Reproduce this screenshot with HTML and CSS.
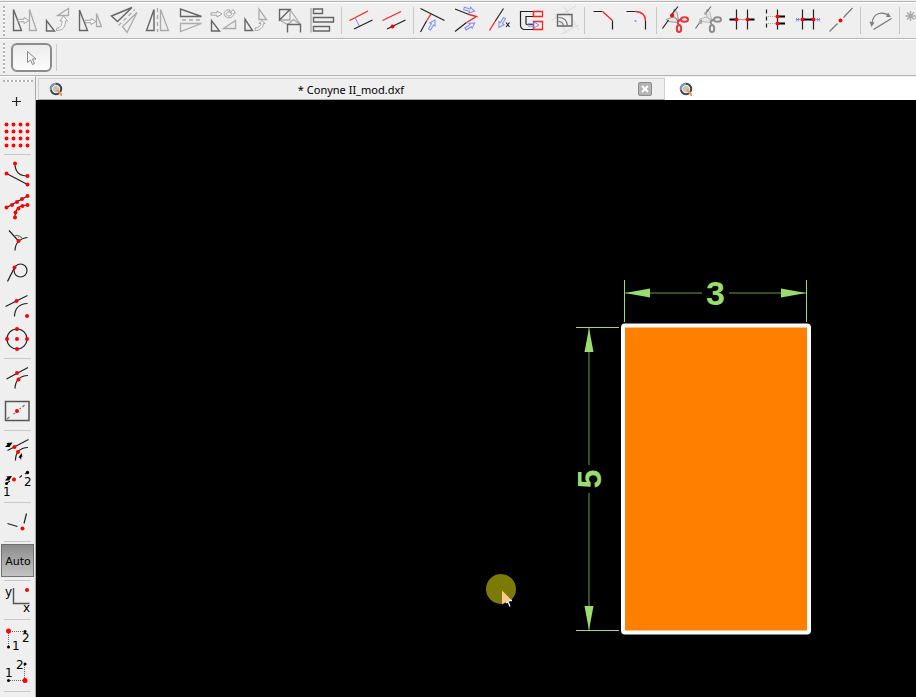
FILE: index.html
```html
<!DOCTYPE html>
<html lang="en">
<head>
<meta charset="utf-8">
<title>Conyne II_mod.dxf</title>
<link rel="stylesheet" href="styles.css">
</head>
<body>
<svg class="defs" width="0" height="0" aria-hidden="true">
  <defs>
    <path id="arrow" d="M0-1.5H6V-4L11 0L6 4V1.5H0z"/>
    <path id="pointer" d="M0-1.200H6V-3L11 0L6 3V1.200H0z"/>
    <g id="shears">
      <path class="blade" d="M14 5L13.5 12L19 18L17 8.500zM6 15.500L13 13L19.500 16L17 18.500L9 17.500z"/>
      <path class="ln" d="M2.500 24.500L8.500 16M12 10L18 2.500"/>
      <path class="handle" d="M17 17.500L21 15.500M17.500 18L18.500 20.500"/>
      <ellipse class="handle" cx="24.500" cy="15.500" rx="3.500" ry="2.200"/>
      <ellipse class="handle" cx="19" cy="24.500" rx="2.200" ry="3.600"/>
    </g>
    <g id="lens">
      <circle cx="8" cy="8" r="5.200" fill="#f1f1f1" stroke="#3c4450" stroke-width="2"/>
      <path d="M3 9A5.200 5.200 0 0 1 8 2.800" fill="none" stroke="#9098a4" stroke-width="2"/>
      <path d="M8 4.500V11.500M4.500 8H11.500M6 6H10V10H6z" stroke="#b4b4b4" fill="none"/>
      <path d="M9 9L13.500 13.500" stroke="#f09a3c" stroke-width="2.200" fill="none"/>
      <path d="M12.500 14L14 14.500" stroke="#d06040" fill="none"/>
    </g>
  </defs>
</svg>

<div class="app">
  <div class="strip"></div>

  <div class="toolbar" role="toolbar" aria-label="Modify">
    <span class="grip"></span>
    <button class="tool" aria-label="Move or copy"><svg viewBox="0 0 33 33"><path class="dk" d="M4.500 5.500V26.500H12.500z"/><path class="lt" d="M20.500 5.500V26.500H27.500z"/><use class="ar" href="#pointer" x="9" y="16.500"/></svg></button>
    <button class="tool" aria-label="Rotate"><svg viewBox="0 0 33 33"><path class="dk" d="M4.500 16.500V27H12.500z"/><path class="lt" d="M15.500 11.500L26.500 4.500V11.500z"/><path class="ar" d="M14.500 26.500C21.500 26.500 23.500 22 23.500 17H25.500L21.500 12L18 17H20C20 21 19 23.500 14.500 24.500z"/></svg></button>
    <button class="tool" aria-label="Scale"><svg viewBox="0 0 33 33"><path class="dk" d="M4.500 6V26.500H12.500z"/><path class="lt" d="M21.500 9.500V22.500H26.500z"/><use class="ar" href="#pointer" x="10" y="17.500"/></svg></button>
    <button class="tool" aria-label="Mirror"><svg viewBox="0 0 33 33"><path class="dk" d="M3.500 12L24 3.500L9.500 17.500z"/><path class="lt" d="M29 8.500L14.500 22.500L19 28.500z"/><path class="lt dash" d="M10.500 21.500L27 5.500"/></svg></button>
    <button class="tool" aria-label="Flip horizontal"><svg viewBox="0 0 33 33"><path class="dk" d="M13 5.500V26.500H5.500z"/><path class="lt" d="M19.500 5.500V26.500H27.500z"/><path class="lt dash" d="M16.500 4V28"/></svg></button>
    <button class="tool" aria-label="Flip vertical"><svg viewBox="0 0 33 33"><path class="dk" d="M6.500 5V12.500H27.500z"/><path class="lt" d="M27.500 19.500H6.500V27.500z"/><path class="lt dash" d="M8 16H28"/></svg></button>
    <button class="tool" aria-label="Move and rotate"><svg viewBox="0 0 33 33"><path class="dk" d="M4.500 16.500V27H12.500z"/><path class="lt" d="M16.500 24.500L28.500 16.500V24.500z"/><use class="ar" href="#pointer" x="4" y="10"/><path class="ar" d="M23 6C18 5 16 9 18 12C21 16 27 13 27 9H28.500L26 5.500L23 9H25C25 12 21 13 19.700 11C18.500 9 20 7.500 23 8z"/></svg></button>
    <button class="tool" aria-label="Rotate and copy"><svg viewBox="0 0 33 33"><path class="dk" d="M5 15V26.500H12.500z"/><path class="lt" d="M19 5V15.500H26.500z"/><path class="ar" d="M15 24C19 24 20.500 22 21 19.500H19L22 16.500L25 19.500H23.500C23 24 20 26.500 15 26.500z"/></svg></button>
    <button class="tool" aria-label="Align to reference"><svg viewBox="0 0 33 33"><path class="lt" d="M17 5.500L27.500 20.500M6.500 16L14.500 20.500M17 5.500V16H6.500M14.500 20.500L20.500 15.500L27.500 20.500"/><path class="dk" d="M17 5.500H6.500V16zM14.500 28.500V20.500H27.500V28.500"/></svg></button>
    <button class="tool" aria-label="Align left"><svg viewBox="0 0 33 33"><path class="lt" d="M5 4V28.500"/><path class="dk" d="M7.500 5H16.500V9.500H7.500zM7.500 13.500H27.500V18H7.500zM7.500 22.500H23.500V27H7.500z"/></svg></button>
    <span class="sep"></span>
    <button class="tool" aria-label="Offset with distance"><svg viewBox="0 0 33 33"><path class="rd" d="M4.500 16.500L23 7"/><path class="bl" d="M10 13.500L14.500 22.500"/><path class="ln" d="M9 25L27.500 16"/></svg></button>
    <button class="tool" aria-label="Offset through point"><svg viewBox="0 0 33 33"><path class="rd" d="M4.500 16.500L23 7.500"/><path class="ln" d="M9 25L27.500 16"/><circle class="pt" cx="14.500" cy="22.500" r="2"/></svg></button>
    <span class="sep"></span>
    <button class="tool" aria-label="Trim"><svg viewBox="0 0 33 33"><path class="ln" d="M3.500 4.500L27.500 16.500M3.500 28L9.500 17"/><path class="rd" d="M9.500 17L14 10"/><use class="bl" href="#pointer" transform="translate(12.500 25.500) rotate(-60)"/></svg></button>
    <button class="tool" aria-label="Trim both"><svg viewBox="0 0 33 33"><path class="ln" d="M5 5L19 10.500M5 27.500L16.500 18.500"/><path class="rd" d="M19 10.500L26.500 12.500L16.500 18.500"/><use class="bl" href="#pointer" transform="translate(14 4.500) rotate(15)"/><use class="bl" href="#pointer" transform="translate(15.500 25) rotate(-33)"/></svg></button>
    <button class="tool" aria-label="Lengthen"><svg viewBox="0 0 33 33"><path class="ln" d="M20.500 4.500L12 17.500"/><path class="rd" d="M12 17.500L6.500 26.500"/><use class="bl" href="#pointer" transform="translate(21.500 14) rotate(120)"/><path class="ln" d="M23 18.500L26.500 23M26.500 18.500L23 23"/></svg></button>
    <button class="tool" aria-label="Stretch"><svg viewBox="0 0 33 33"><path class="ln" d="M17.500 7.500H4.500V21Q4.500 25.500 9 25.500H17.500V20.500H11Q10 20.500 10 19.500V12.500H17.500z"/><path class="rd" d="M17.500 7.500H26.500V12.500H17.500zM17.500 17.500H26.500V25.500H17.500z"/><use class="bl" href="#pointer" x="12" y="21"/></svg></button>
    <button class="tool" aria-label="Clip to rectangle"><svg viewBox="0 0 33 33"><path class="faint" d="M2.500 16.500L27 2M15 2.500L30 26M5 9L18 29M12.500 30L29.500 21"/><path class="dk" d="M8.500 10.500H23V22H8.500z"/><path class="md" d="M9.500 13.500Q18 13.500 18.500 22M9.500 17.500Q14 17.500 14.500 22"/></svg></button>
    <span class="sep"></span>
    <button class="tool" aria-label="Bevel"><svg viewBox="0 0 33 33"><path class="ln" d="M5.500 7.500H14.500M24.500 16.500V25.500"/><path class="rd" d="M14.500 7.500L24.500 16.500"/></svg></button>
    <button class="tool" aria-label="Round"><svg viewBox="0 0 33 33"><path class="ln" d="M5.500 7.500H14.500M24.500 17V25.500"/><path class="rd" d="M14.500 7.500Q24.500 8 24.500 17"/><circle class="cp" cx="14.500" cy="17" r="1"/></svg></button>
    <span class="sep"></span>
    <button class="tool" aria-label="Divide"><svg viewBox="0 0 33 33"><use href="#shears"/><circle class="pt" cx="12" cy="11.500" r="2"/></svg></button>
    <button class="tool muted" aria-label="Divide segment"><svg viewBox="0 0 33 33"><use href="#shears"/><circle cx="7.500" cy="18.500" r="1.800"/><circle cx="12.500" cy="9.500" r="1.500"/></svg></button>
    <button class="tool" aria-label="Break out segment"><svg viewBox="0 0 33 33"><path class="lt" d="M10.500 15.500H21.500"/><path class="ln" d="M10.500 5.500V25.500M21.500 5.500V25.500"/><path class="ln thick" d="M3.500 15.500H10.500M21.500 15.500H28.500"/><circle class="pt" cx="10.500" cy="15.500" r="2"/><circle class="pt" cx="21.500" cy="15.500" r="2"/></svg></button>
    <button class="tool" aria-label="Auto trim"><svg viewBox="0 0 33 33"><path class="ln dash" d="M7.500 5.500V26"/><path class="lt dots" d="M9 12.500H17M9 19.500H17"/><path class="ln" d="M18.500 5.500V25.500"/><path class="ln thick" d="M18.500 12.500H26M18.500 19.500H26"/><circle class="pt" cx="18.500" cy="12.500" r="2"/><circle class="pt" cx="18.500" cy="19.500" r="2"/></svg></button>
    <button class="tool" aria-label="Break out gap"><svg viewBox="0 0 33 33"><path class="ln" d="M10.500 5.500V25.500M21.500 5.500V25.500"/><path class="bl" d="M8 15.500H4M4 14L7 17.500M7 14L4 17.500M24 15.500H28M25 14L28 17.500M28 14L25 17.500"/><path class="ln thick" d="M10.500 15.500H21.500"/><circle class="pt" cx="10.500" cy="15.500" r="2"/><circle class="pt" cx="21.500" cy="15.500" r="2"/></svg></button>
    <button class="tool" aria-label="Split at point"><svg viewBox="0 0 33 33"><path class="md" d="M4.500 27.500L12.500 19.500M18.500 13.500L27.500 4"/><circle class="pt" cx="15.500" cy="16.500" r="2"/></svg></button>
    <span class="sep"></span>
    <button class="tool" aria-label="Reverse"><svg viewBox="0 0 33 33"><path class="md" d="M9.500 25.500L27.500 14.500M8 19Q9 11 15 9.500Q20 8.500 24 11"/><path class="mdf" d="M5.500 17.500L10.500 18.500L7.500 23zM24 8.500L27 13L22 13z"/></svg></button>
    <span class="sep"></span>
    <button class="tool" aria-label="Explode"><svg viewBox="0 0 33 33"><path class="burst" d="M7.500 7V17M2.500 12H12.500M4 8.500L11 15.500M11 8.500L4 15.500M12 15L15 10"/></svg></button>
  </div>

  <div class="toolbar options" role="toolbar" aria-label="Options">
    <span class="grip"></span>
    <button class="select-tool" aria-label="Select"><svg viewBox="0 0 12 16"><path d="M1.500 1.500V12.500L4.500 10L6.500 14.500L8.500 13.500L6.500 9H10z"/></svg></button>
    <span class="rule"></span>
  </div>

  <div class="work">
    <div class="sidebar" role="toolbar" aria-label="Snaps" aria-orientation="vertical">
      <span class="hgrip"></span>
      <button class="tool" aria-label="Free positioning"><svg viewBox="0 0 33 33"><path class="ln" d="M15.500 12V21M11 16.500H20"/></svg></button>
      <button class="tool" aria-label="Snap to grid"><svg viewBox="0 0 33 33"><path class="dotgrid" d="M5.500 6.500H27M5.500 13.500H27M5.500 20.500H27M5.500 27.500H27"/></svg></button>
      <span class="vsep"></span>
      <button class="tool" aria-label="End points"><svg viewBox="0 0 33 33"><path class="ln" d="M14 6.500Q14 19 26.500 19M5.500 16.500L26.500 27.500"/><path class="pts" d="M14 6.500h0M26.500 19h0M5.500 16.500h0M26.500 27.500h0"/></svg></button>
      <button class="tool" aria-label="On entity"><svg viewBox="0 0 33 33"><path class="ln" d="M5.500 17.500L26.500 6M14 27.500Q14 15 26.500 15"/><path class="pts" d="M5.500 17.500h0M11 15h0M16 12h0M21 9h0M26.500 6h0M26.500 15h0M21.500 16h0M17.500 18.500h0M14.500 22.500h0M14 27.500h0"/></svg></button>
      <button class="tool" aria-label="Perpendicular"><svg viewBox="0 0 33 33"><path class="ln" d="M8 7.500L17.500 18M14 27.500Q14.500 16 26.500 14.500"/><path class="md" d="M13.500 13Q17 11 21 15"/><path class="pts" d="M17.500 18h0"/><circle class="cpd" cx="17.500" cy="14" r=".7"/></svg></button>
      <button class="tool" aria-label="Tangential"><svg viewBox="0 0 33 33"><circle class="ln" cx="19.500" cy="14.500" r="6.500"/><path class="ln" d="M6.500 25.500L13.500 11.500"/><path class="pts" d="M13.500 11.500h0"/></svg></button>
      <button class="tool" aria-label="Reference points"><svg viewBox="0 0 33 33"><path class="ln" d="M4.500 17.500L26.500 6.500M26.500 14.500Q14 15 13.500 27.500"/><path class="pts" d="M15.500 12h0M26 27h0"/></svg></button>
      <button class="tool" aria-label="Center points"><svg viewBox="0 0 33 33"><circle class="ln" cx="16" cy="17" r="10"/><path class="pts" d="M16 7h0M16 17h0M16 27h0M6 17h0M26 17h0"/></svg></button>
      <span class="vsep"></span>
      <button class="tool" aria-label="Middle points"><svg viewBox="0 0 33 33"><path class="ln" d="M5.500 18L27 6.500M27 14.500Q14.500 15 14 27.500"/><path class="pts" d="M16 12h0M17.500 18.500h0"/></svg></button>
      <button class="tool" aria-label="Middle of two points"><svg viewBox="0 0 33 33"><path class="box" d="M4.500 7.500H28V26.500H4.500z"/><path class="md" d="M6 25L8.500 23M12.500 20L14 19M18.500 15L20 14M21.500 13L23.500 11"/><path class="pts" d="M16 17h0"/></svg></button>
      <span class="vsep"></span>
      <button class="tool" aria-label="Distance from end"><svg viewBox="0 0 33 33"><path class="ln" d="M6.500 17.500L27.500 6.500M27 14.500Q14.500 15 14.500 27.500"/><path d="M4 14L6.500 11.500L5.500 10L11.500 9.500L8.500 14zM20 27L20.500 23.500L21.500 24L20.500 20L17.500 24.500L19 25z"/><path class="pts" d="M13.500 14h0M17 19h0"/></svg></button>
      <button class="tool" aria-label="Distance between points"><svg viewBox="0 0 33 33"><path d="M4 14.500L6.500 11.500L5 10.500L11 10L8 14.500z"/><path class="ln" d="M5.500 17.500L9 15M18.500 11.500L21 9.500M24 8L26.500 6.500"/><circle cx="5.500" cy="17.500" r="1.500"/><circle cx="26.500" cy="6.500" r="1.700"/><path class="pts" d="M13 13.500h0"/><text x="2" y="30">1</text><text x="23" y="20">2</text></svg></button>
      <span class="vsep"></span>
      <button class="tool" aria-label="Intersection"><svg viewBox="0 0 33 33"><path class="ln" d="M6.500 18.500L16.500 21.500M25.500 8.500L23 18.500"/><path class="pts" d="M21.500 23.500h0"/></svg></button>
      <span class="vsep"></span>
      <button class="auto" aria-pressed="true">Auto</button>
      <span class="vsep"></span>
      <button class="tool" aria-label="Coordinate"><svg viewBox="0 0 33 33"><path class="box" d="M12.500 5V20.500H28.500"/><path class="pts" d="M26 7h0"/><text x="4" y="13">y</text><text x="22" y="29">x</text></svg></button>
      <span class="vsep"></span>
      <button class="tool" aria-label="Restrict orthogonally"><svg viewBox="0 0 33 33"><path class="dk dots" d="M7 9.500H24M7.500 9V25"/><circle cx="24" cy="9.500" r="1.500"/><circle cx="7.500" cy="25" r="1.500"/><circle class="pt" cx="7.500" cy="9" r="2.500"/><text x="21" y="20">2</text><text x="11" y="28">1</text></svg></button>
      <button class="tool" aria-label="Restrict vertically"><svg viewBox="0 0 33 33"><path class="dk dots" d="M7 25.500H24M23.500 25V9"/><circle cx="24" cy="9" r="1.500"/><circle cx="7.500" cy="25.500" r="1.500"/><circle class="pt" cx="24" cy="25.500" r="2.500"/><text x="15" y="14">2</text><text x="4" y="22">1</text></svg></button>
      <span class="vsep"></span>
    </div>

    <main class="document">
      <div class="tabs" role="tablist">
        <div class="tab" role="tab">
          <svg class="lens" viewBox="0 0 16 16"><use href="#lens"/></svg>
          <span class="name">* Conyne II_mod.dxf</span>
          <button class="close" aria-label="Close tab"><svg viewBox="0 0 10 10"><path d="M2 2L8 8M8 2L2 8"/></svg></button>
        </div>
        <div class="tab current" role="tab" aria-selected="true">
          <svg class="lens" viewBox="0 0 16 16"><use href="#lens"/></svg>
        </div>
      </div>
      <div class="canvas">
        <svg class="drawing" width="880" height="597">
          <rect class="solid" x="587" y="225.500" width="186" height="307" rx="2"/>
          <path class="ext" d="M588.500 180V222M770.500 180V222M540 227.500H583M540 530.500H583"/>
          <path class="dim" d="M589 193H666M693 193H770M553 228V365M553 393V530"/>
          <path class="head" d="M589 193L614 188.500V197.500zM770 193L745 188.500V197.500zM553 228L548.500 252H557.500zM553 530L548.500 506H557.500z"/>
          <text class="value" x="679.500" y="205">3</text>
          <text class="value" transform="translate(565 379) rotate(-90)">5</text>
          <circle class="halo" cx="465" cy="489" r="15"/>
          <path class="ptr" d="M466 490.500V504.500L469.500 502L475.500 500z"/>
          <path class="tail" d="M470 503L472 501.500L474 506.500M473 500.500L476 500.500"/>
        </svg>
      </div>
    </main>
  </div>
</div>
</body>
</html>
```
FILE: styles.css
```css
* { box-sizing: border-box; }

body {
  margin: 0;
  background: #efefef;
  font-family: "DejaVu Sans", sans-serif;
  font-size: 11px;
  color: #000;
}

.defs { position: absolute; }

.app {
  display: flex;
  flex-direction: column;
  height: 100vh;
  overflow: hidden;
}

.strip {
  flex: none;
  height: 2px;
  border-bottom: 1px solid #b4b4b4;
}

button {
  margin: 0;
  padding: 0;
  border: 0;
  background: none;
  font: inherit;
  color: inherit;
}

.toolbar {
  flex: none;
  display: flex;
  align-items: center;
  height: 37px;
  border-top: 1px solid #fff;
  border-bottom: 1px solid #b4b4b4;
  overflow: hidden;
}

.grip {
  flex: none;
  width: 2px;
  height: 30px;
  margin: 0 4px 0 3px;
  background: repeating-linear-gradient(#b4b4b4 0 2px, #fafafa 2px 4px);
}

.tool { flex: none; width: 33px; height: 33px; }
.tool svg { display: block; width: 33px; height: 33px; }
.tool text { font-size: 12px; }

.sep {
  flex: none;
  width: 6px;
  height: 27px;
  background: linear-gradient(#c8c8c8, #c8c8c8) 2px 0 / 1px 100% no-repeat;
}

.ln, .dk, .lt, .md, .rd, .bl, .faint, .ar, .box { fill: none; }
.ln { stroke: #222; stroke-width: 1.2; }
.thick { stroke: #000; stroke-width: 2; }
.dk { stroke: #666; stroke-width: 1.4; }
.lt { stroke: #aaa; stroke-width: 1.3; }
.md { stroke: #777; stroke-width: 1.2; }
.mdf { fill: #808080; }
.rd { stroke: #f22; stroke-width: 1.3; }
.bl { stroke: #7f8cf5; stroke-width: 1; }
.faint { stroke: #dadada; }
.ar { fill: #f6f6f6; stroke: #a4a4a4; }
.box { stroke: #555; stroke-width: 1.5; }
.dash { stroke-dasharray: 4 3; }
.dots { stroke-width: 1; stroke-dasharray: 1 1; }
.pt { fill: #f00; }
.cp { fill: #7f8cf5; }
.cpd { fill: #888; }
.pts { fill: none; stroke: #f00; stroke-width: 4; stroke-linecap: round; }
.dotgrid { fill: none; stroke: #f00; stroke-width: 4; stroke-linecap: round; stroke-dasharray: 0 7; }
.blade { fill: #e4e4e4; stroke: #999; }
.handle { fill: none; stroke: #e8343a; stroke-width: 2; }
.burst { fill: none; stroke: #aaa; stroke-width: 1.4; }
.muted { filter: grayscale(1); }
.muted svg { fill: #888; opacity: .65; }

.select-tool {
  display: flex;
  align-items: center;
  justify-content: center;
  width: 41px;
  height: 29px;
  margin-left: 2px;
  border: 2px solid #8c8c8c;
  border-radius: 6px;
  background: linear-gradient(#ececec, #fcfcfc);
}
.select-tool svg { width: 12px; height: 16px; fill: #f4f4f4; stroke: #888; }

.rule { width: 1px; height: 27px; margin-left: 4px; background: #ccc; }

.work { flex: 1; display: flex; min-height: 0; }

.sidebar {
  flex: none;
  display: flex;
  flex-direction: column;
  width: 36px;
  padding-left: 1px;
  border-top: 1px solid #fff;
  border-right: 1px solid #a8a8a8;
  overflow: hidden;
}

.hgrip {
  flex: none;
  width: 30px;
  height: 2px;
  margin: 3px 0 3px 2px;
  background: repeating-linear-gradient(90deg, #b4b4b4 0 2px, #fafafa 2px 4px);
}

.vsep {
  flex: none;
  width: 27px;
  height: 6px;
  margin-left: 3px;
  background: linear-gradient(#c8c8c8, #c8c8c8) 0 3px / 100% 1px no-repeat;
}

.auto {
  flex: none;
  width: 33px;
  height: 33px;
  padding: 2px 0 0 1px;
  border: 1px solid #707070;
  background: linear-gradient(#8c8c8c, #c4c4c4);
}

.document { flex: 1; display: flex; flex-direction: column; min-width: 0; }

.tabs {
  flex: none;
  display: flex;
  align-items: flex-end;
  height: 24px;
  padding-left: 2px;
}

.tab {
  flex: 0 0 71.4%;
  display: flex;
  align-items: center;
  height: 22px;
  padding: 0 12px 0 9px;
  border: 1px solid #d0d0d0;
  border-bottom-color: #a8a8a8;
}
.tab.current {
  flex: 1 1 0;
  height: 23px;
  padding-left: 13px;
  border: 0;
  background: #fff;
}
.lens { flex: none; width: 16px; height: 16px; }
.name {
  flex: 1;
  padding-top: 1px;
  text-align: center;
  font-family: "Noto Sans", sans-serif;
  font-size: 11px;
  line-height: 16px;
}

.close {
  display: flex;
  align-items: center;
  justify-content: center;
  width: 14px;
  height: 14px;
  border: 1px solid #8c8c8c;
  border-radius: 2px;
  background: #b4b4b4;
}
.close svg { width: 10px; height: 10px; stroke: #fff; stroke-width: 2; }

.canvas { flex: 1; min-height: 0; background: #000; overflow: hidden; }
.drawing { display: block; }
.solid { fill: #ff8000; stroke: #fff; stroke-width: 4; }
.ext { stroke: #9add6e; }
.dim { stroke: #659c46; stroke-width: 1; }
.head { fill: #9add6e; }
.value {
  fill: #9add6e;
  font: bold 34px "Liberation Sans", sans-serif;
  text-anchor: middle;
}
.halo { fill: #7c7a06; }
.ptr { fill: #ffc88c; }
.tail { fill: none; stroke: #fff; stroke-width: 1.3; }
```
